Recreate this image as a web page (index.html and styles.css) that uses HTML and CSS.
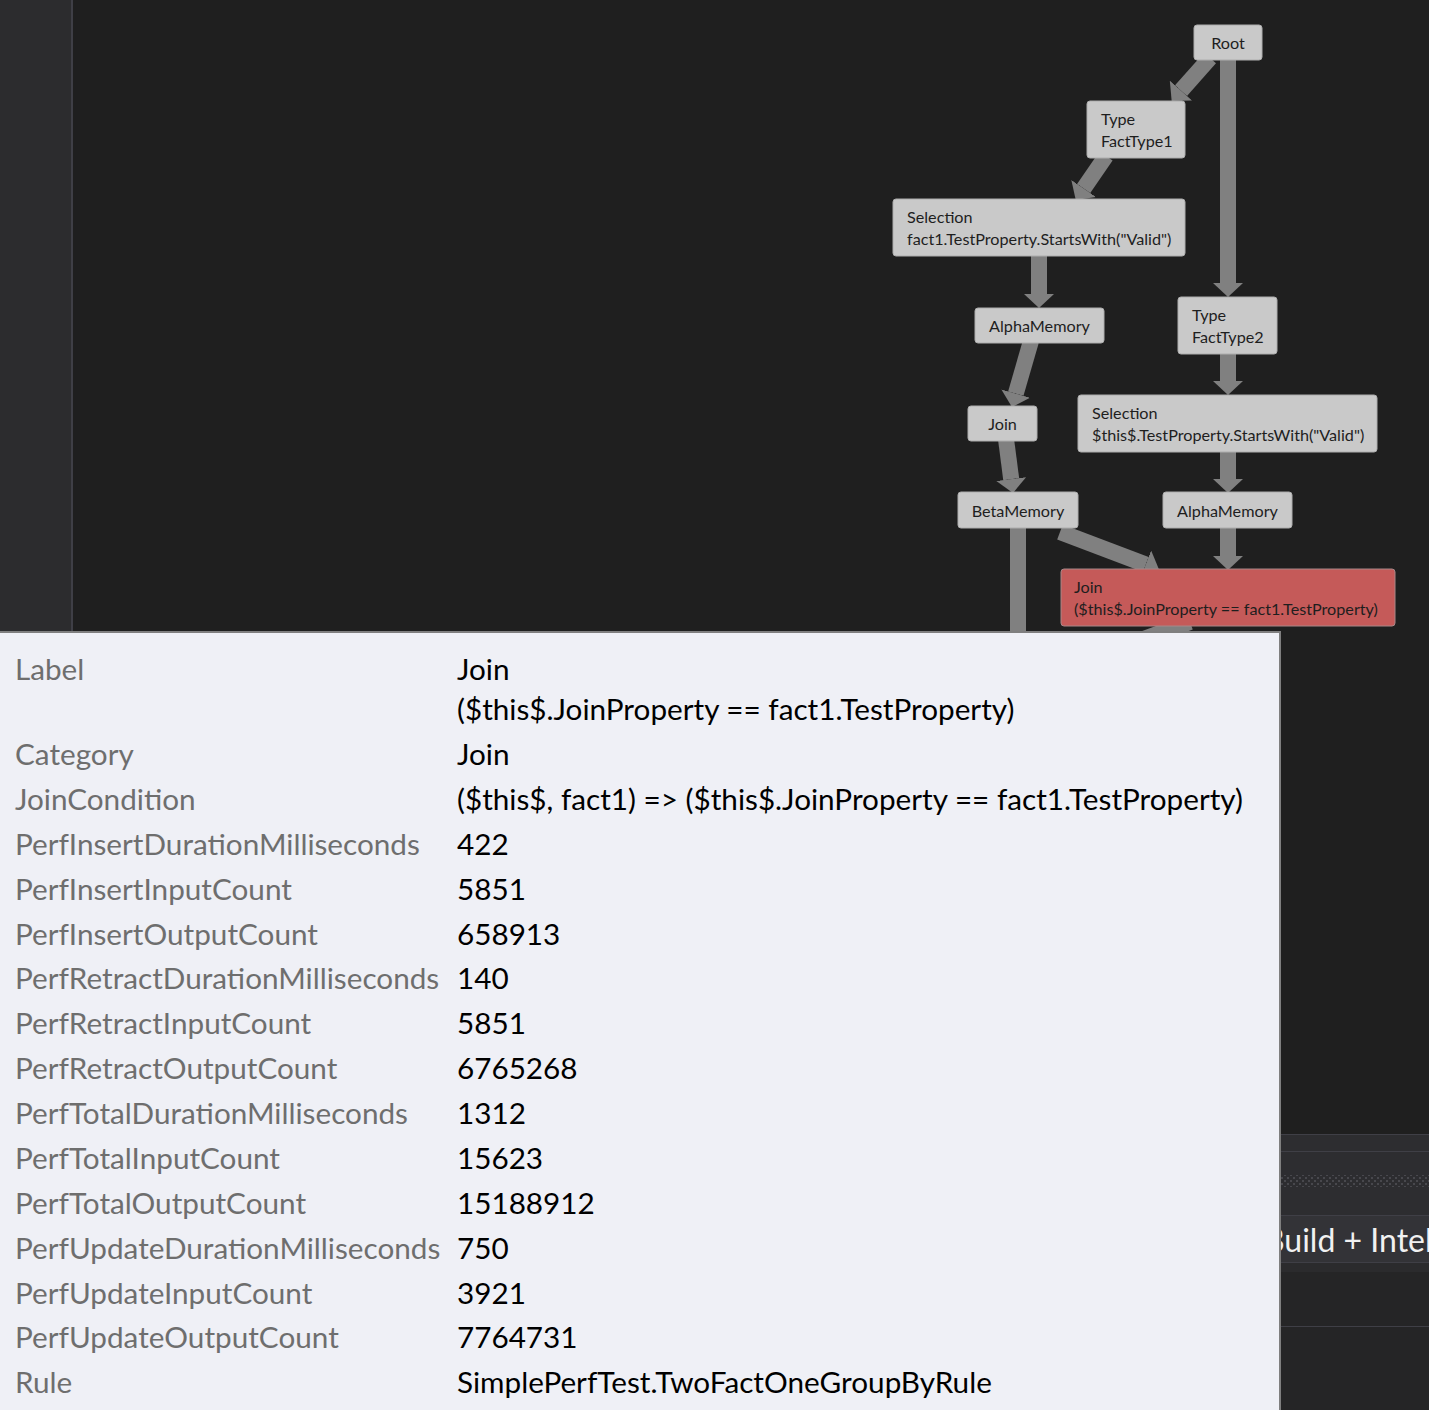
FILE: index.html
```html
<!DOCTYPE html>
<html lang="en">
<head>
<meta charset="utf-8">
<title>Rete Network</title>
<link rel="stylesheet" href="styles.css">
</head>
<body>
<div class="app">
  <aside class="sidebar"></aside>
  <main class="main">
    <section class="canvas">
      <svg class="graph" viewBox="73 0 1356 1134" width="1356" height="1134" xmlns="http://www.w3.org/2000/svg">
        <defs>
          <marker id="arrow" markerUnits="userSpaceOnUse" markerWidth="14" markerHeight="30" viewBox="0 0 14 30" refX="0" refY="15" orient="auto">
            <path d="M0,0 L14,15 L0,30 Z" fill="#808080"/>
          </marker>
        </defs>
        <g class="edges">
          <line x1="1210" y1="58" x2="1181" y2="90.6" marker-end="url(#arrow)"/>
          <line x1="1106" y1="156" x2="1083.7" y2="188.5" marker-end="url(#arrow)"/>
          <line x1="1039" y1="254" x2="1039" y2="294" marker-end="url(#arrow)"/>
          <line x1="1228" y1="58" x2="1228" y2="283" marker-end="url(#arrow)"/>
          <line x1="1031" y1="341" x2="1015.8" y2="393.6" marker-end="url(#arrow)"/>
          <line x1="1006" y1="439" x2="1011.2" y2="479.1" marker-end="url(#arrow)"/>
          <line x1="1228" y1="351" x2="1228" y2="381" marker-end="url(#arrow)"/>
          <line x1="1228" y1="450" x2="1228" y2="479" marker-end="url(#arrow)"/>
          <line x1="1228" y1="526" x2="1228" y2="556" marker-end="url(#arrow)"/>
          <line x1="1060" y1="532" x2="1145.8" y2="564.4" marker-end="url(#arrow)"/>
          <line x1="1018" y1="526" x2="1018" y2="720"/>
          <line x1="1190" y1="622" x2="950" y2="710"/>
        </g>
        <g class="node">
          <rect x="1194" y="25" width="68" height="35" rx="3"/>
          <text x="1228" y="42" class="c">Root</text>
        </g>
        <g class="node">
          <rect x="1087" y="101" width="98" height="57" rx="3"/>
          <text x="1101" y="118">Type</text>
          <text x="1101" y="140">FactType1</text>
        </g>
        <g class="node">
          <rect x="893" y="199" width="292" height="57" rx="3"/>
          <text x="907" y="216">Selection</text>
          <text x="907" y="238">fact1.TestProperty.StartsWith("Valid")</text>
        </g>
        <g class="node">
          <rect x="975" y="308" width="129" height="35" rx="3"/>
          <text x="1039.5" y="325" class="c">AlphaMemory</text>
        </g>
        <g class="node">
          <rect x="1178" y="297" width="99" height="57" rx="3"/>
          <text x="1192" y="314">Type</text>
          <text x="1192" y="336">FactType2</text>
        </g>
        <g class="node">
          <rect x="968" y="406" width="69" height="35" rx="3"/>
          <text x="1002.5" y="423" class="c">Join</text>
        </g>
        <g class="node">
          <rect x="1078" y="395" width="299" height="57" rx="3"/>
          <text x="1092" y="412">Selection</text>
          <text x="1092" y="434">$this$.TestProperty.StartsWith("Valid")</text>
        </g>
        <g class="node">
          <rect x="958" y="492" width="120" height="36" rx="3"/>
          <text x="1018" y="510" class="c">BetaMemory</text>
        </g>
        <g class="node">
          <rect x="1163" y="492" width="129" height="36" rx="3"/>
          <text x="1227.5" y="510" class="c">AlphaMemory</text>
        </g>
        <g class="node selected">
          <rect x="1061" y="569" width="334" height="57" rx="3"/>
          <text x="1074" y="586">Join</text>
          <text x="1074" y="608">($this$.JoinProperty == fact1.TestProperty)</text>
        </g>
      </svg>
    </section>
    <section class="panel">
      <div class="panel-head"></div>
      <div class="panel-grip"><div class="dots"></div></div>
      <div class="panel-tabs"><span class="tab-label">Build + IntelliSense</span></div>
      <div class="panel-strip"></div>
      <div class="panel-body"></div>
      <div class="panel-rest"></div>
    </section>
  </main>
</div>
<div class="tooltip">
  <dl class="props">
    <dt>Label</dt><dd>Join<br>($this$.JoinProperty == fact1.TestProperty)</dd>
    <dt>Category</dt><dd>Join</dd>
    <dt>JoinCondition</dt><dd>($this$, fact1) =&gt; ($this$.JoinProperty == fact1.TestProperty)</dd>
    <dt>PerfInsertDurationMilliseconds</dt><dd>422</dd>
    <dt>PerfInsertInputCount</dt><dd>5851</dd>
    <dt>PerfInsertOutputCount</dt><dd>658913</dd>
    <dt>PerfRetractDurationMilliseconds</dt><dd>140</dd>
    <dt>PerfRetractInputCount</dt><dd>5851</dd>
    <dt>PerfRetractOutputCount</dt><dd>6765268</dd>
    <dt>PerfTotalDurationMilliseconds</dt><dd>1312</dd>
    <dt>PerfTotalInputCount</dt><dd>15623</dd>
    <dt>PerfTotalOutputCount</dt><dd>15188912</dd>
    <dt>PerfUpdateDurationMilliseconds</dt><dd>750</dd>
    <dt>PerfUpdateInputCount</dt><dd>3921</dd>
    <dt>PerfUpdateOutputCount</dt><dd>7764731</dd>
    <dt>Rule</dt><dd>SimplePerfTest.TwoFactOneGroupByRule</dd>
  </dl>
</div>
</body>
</html>
```
FILE: styles.css
```css
html, body {
  margin: 0;
  padding: 0;
}
body {
  width: 1429px;
  height: 1410px;
  overflow: hidden;
  position: relative;
  background: #1f1f1f;
  font-family: Lato, "Noto Sans", sans-serif;
}
.app {
  display: flex;
  height: 1410px;
}
.sidebar {
  flex: none;
  width: 71px;
  background: #2c2c2e;
  border-right: 2px solid #3f3f46;
}
.main {
  flex: 1;
  min-width: 0;
  display: flex;
  flex-direction: column;
}
.canvas {
  flex: none;
  height: 1134px;
  position: relative;
  overflow: hidden;
  background: #1f1f1f;
}
.graph {
  display: block;
}
.edges line {
  stroke: #808080;
  stroke-width: 16;
}
.node rect {
  fill: #c9c9c9;
  stroke: #adadad;
  stroke-width: 1;
}
.node text {
  font-family: Lato, "Noto Sans", sans-serif;
  font-size: 16.2px;
  fill: #1e1e1e;
  dominant-baseline: central;
}
.node text.c {
  text-anchor: middle;
}
.node.selected rect {
  fill: #c55a59;
  stroke: #a98788;
}
.panel {
  flex: 1;
  display: flex;
  flex-direction: column;
  background: #252526;
  border-top: 1px solid #3f3f46;
}
.panel-head {
  height: 16px;
  background: #2d2d30;
  border-bottom: 1px solid #3f3f46;
}
.panel-grip {
  height: 64px;
  box-sizing: border-box;
  padding-top: 23px;
  background: #2d2d30;
  border-bottom: 1px solid #3f3f46;
}
.dots {
  height: 12px;
  background-image:
    radial-gradient(circle, #48484d 1.1px, transparent 1.3px),
    radial-gradient(circle, #48484d 1.1px, transparent 1.3px);
  background-size: 6px 6px, 6px 6px;
  background-position: 0 0, 3px 3px;
}
.panel-tabs {
  height: 46px;
  display: flex;
  align-items: center;
  padding-left: 1191px;
  background: #333337;
  border-bottom: 1px solid #3f3f46;
  color: #f1f1f1;
  font-size: 32px;
  white-space: nowrap;
  overflow: hidden;
}
.panel-strip {
  height: 9px;
  background: #2b2b2d;
}
.panel-body {
  height: 54px;
  background: #252526;
  border-bottom: 1px solid #3f3f46;
}
.panel-rest {
  flex: 1;
  background: #252526;
}
.tooltip {
  position: absolute;
  left: 0;
  top: 631px;
  width: 1281px;
  bottom: 0;
  box-sizing: border-box;
  background: #eff0f6;
  border-top: 2px solid #7f7f7f;
  border-right: 2px solid #7f7f7f;
  padding: 13.8px 0 0 15px;
  font-size: 29.7px;
}
.props {
  display: grid;
  grid-template-columns: 442px auto;
  margin: 0;
  line-height: 40px;
}
.props dt,
.props dd {
  margin: 0;
  padding: 2.44px 0;
  white-space: nowrap;
}
.props dt {
  color: #6e6e6e;
}
.props dd {
  color: #000;
}
```
